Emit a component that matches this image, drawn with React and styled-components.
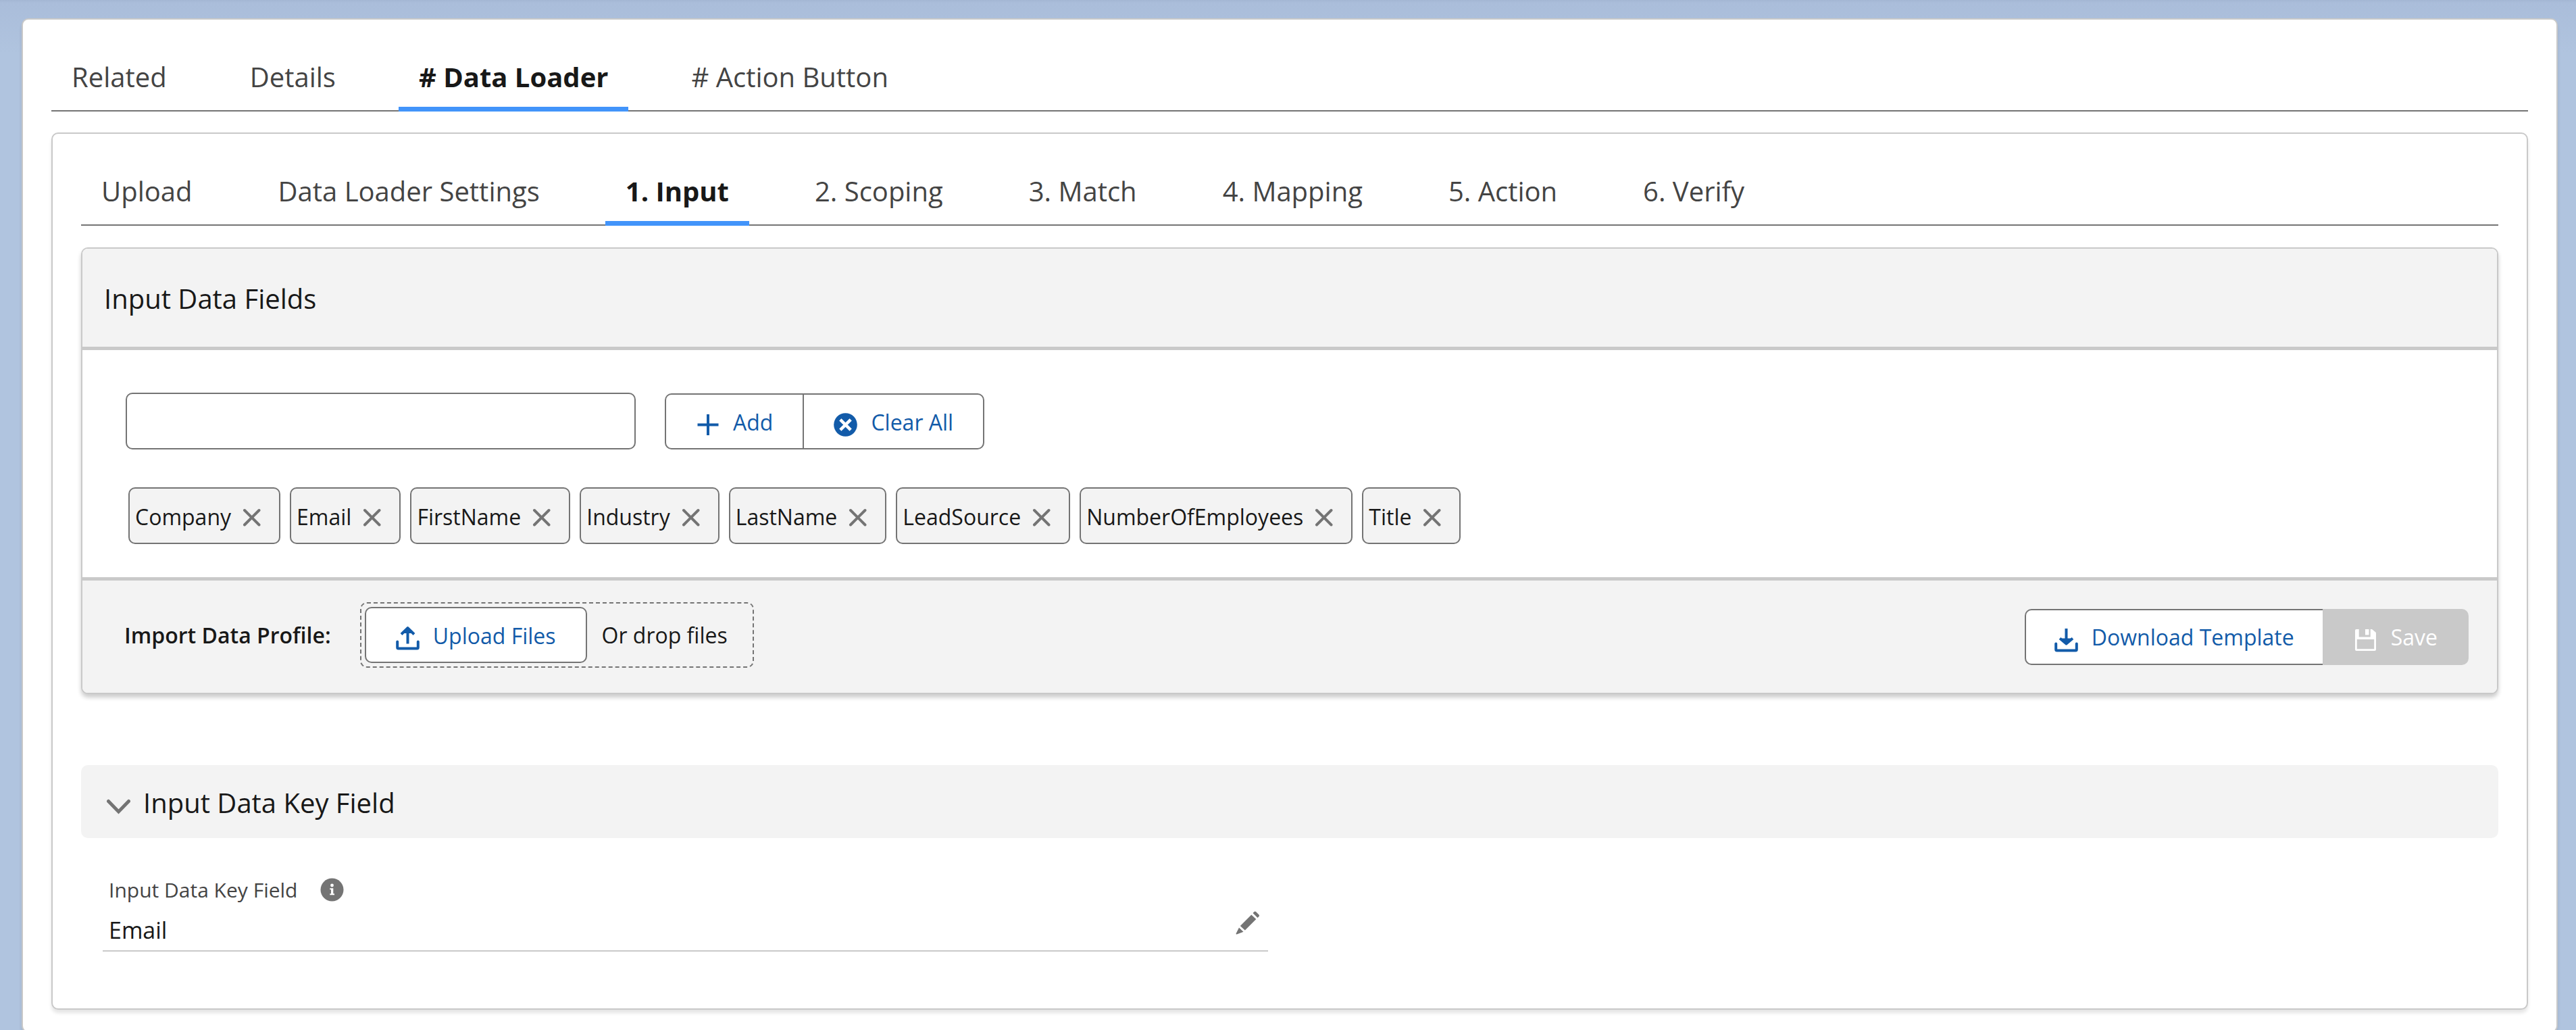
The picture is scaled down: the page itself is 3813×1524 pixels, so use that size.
import React, { useState } from 'react';
import styled, { createGlobalStyle, css } from 'styled-components';

const color = {
  text: '#181818',
  muted: '#444444',
  line: '#747474',
  border: '#c9c9c9',
  surface: '#f3f3f3',
  link: '#125ba9',
  active: '#4294fa',
};

const GlobalStyle = createGlobalStyle`
  *, *::before, *::after { box-sizing: border-box; }
  body {
    margin: 0;
    color: ${color.text};
    font-family: 'Open Sans', 'Noto Sans', sans-serif;
    font-size: 32px;
  }
  button, input { font: inherit; color: inherit; }
  h2, h3 { margin: 0; font-size: 40px; font-weight: 400; }
`;

const Page = styled.main`
  height: 100vh;
  overflow: hidden;
  padding: 27px 27px 0 32px;
  background: linear-gradient(#a3b6d3 0, #aabdda 4px, #b0c4df 80px);
`;

const Card = styled.section`
  display: flex;
  flex-direction: column;
  border: 2px solid ${color.border};
  border-radius: 10px;
  background: #fff;
  box-shadow: 0 5px 5px rgba(0, 0, 0, 0.1);
`;

const RecordCard = styled(Card)`
  gap: 31px;
  padding: 41px 42px 32px;
`;

const LoaderCard = styled(Card)`
  padding: 41px 42px 84px;
`;

const TabList = styled.div`
  display: flex;
  gap: ${(p) => p.$gap}px;
  box-shadow: inset 0 -2px ${color.line};
`;

const Tab = styled.button`
  padding: 0 30px;
  border: 0;
  border-bottom: 7px solid ${(p) => (p.$active ? color.active : 'transparent')};
  background: none;
  color: ${(p) => (p.$active ? color.text : color.muted)};
  font-size: 40px;
  font-weight: ${(p) => (p.$active ? 700 : 400)};
  line-height: 88px;
  white-space: nowrap;
`;

const Panel = styled(Card)`
  margin-top: 32px;
  overflow: hidden;
  box-shadow: 0 5px 6px rgba(0, 0, 0, 0.2);
`;

const PanelHeader = styled.header`
  display: flex;
  align-items: center;
  height: 150px;
  padding: 2px 32px 0;
  border-bottom: 5px solid ${color.border};
  background: ${color.surface};
`;

const PanelBody = styled.div`
  display: flex;
  flex-direction: column;
  gap: 56px;
  padding: 63px 64px 49px;
`;

const PanelFooter = styled.footer`
  display: flex;
  align-items: center;
  justify-content: space-between;
  min-height: 171px;
  padding: 0 42px 0 62px;
  border-top: 5px solid ${color.border};
  background: ${color.surface};
`;

const FieldForm = styled.form`
  display: flex;
  align-items: flex-end;
  gap: 43px;
`;

const TextInput = styled.input`
  width: 755px;
  height: 84px;
  padding: 0 30px;
  border: 2px solid ${color.line};
  border-radius: 10px;
  background: #fff;
`;

const ButtonGroup = styled.div`
  display: flex;

  & > :first-child { border-radius: 10px 0 0 10px; border-right-width: 0; }
  & > :last-child { border-radius: 0 10px 10px 0; }
`;

const Button = styled.button`
  display: flex;
  align-items: center;
  gap: 20px;
  height: 83px;
  padding: 2px ${(p) => p.$pad || 44}px 0;
  border: 2px solid ${color.line};
  border-radius: 10px;
  background: #fff;
  color: ${color.link};
  line-height: 44px;
  white-space: nowrap;

  & > svg { margin-top: 8px; }

  ${(p) =>
    p.disabled &&
    css`
      border-color: ${color.border};
      background: ${color.border};
      color: #fff;
    `}
`;

const ChipList = styled.ul`
  display: flex;
  flex-wrap: wrap;
  gap: 14px;
  margin: 0;
  padding: 0 0 0 4px;
  list-style: none;
`;

const Chip = styled.li`
  display: flex;
  align-items: center;
  gap: 13px;
  height: 84px;
  padding: 2px 23px 0 8px;
  border: 2px solid ${color.line};
  border-radius: 10px;
  background: ${color.surface};
`;

const IconButton = styled.button`
  display: flex;
  align-items: center;
  justify-content: center;
  width: 35px;
  height: 40px;
  padding: 0;
  border: 0;
  background: none;
  color: ${color.line};
`;

const ImportRow = styled.div`
  display: flex;
  align-items: center;
  gap: 43px;
  padding-bottom: 5px;
`;

const ImportLabel = styled.span`
  font-weight: 600;
`;

const DropZone = styled.div`
  display: flex;
  align-items: center;
  padding: 5px;
  border: 2px dashed ${color.line};
  border-radius: 10px;
`;

const DropHint = styled.span`
  padding: 0 32px 0 22px;
`;

const SectionToggle = styled.button`
  display: flex;
  align-items: center;
  gap: 19px;
  width: 100%;
  height: 108px;
  margin-top: 105px;
  padding: 2px 38px 0;
  border: 0;
  border-radius: 10px;
  background: ${color.surface};
  font-size: 40px;
  text-align: left;

  & > svg { margin-top: 12px; color: ${color.line}; }
`;

const FieldGrid = styled.div`
  display: grid;
  grid-template-columns: 1fr 1fr;
  padding-top: 51px;
`;

const Field = styled.div`
  margin: 0 32px;
  padding: 0 13px 0 9px;
  border-bottom: 2px solid ${color.border};
`;

const FieldLabel = styled.div`
  display: flex;
  align-items: center;
  gap: 34px;
  height: 50px;
  color: ${color.muted};
  font-size: 30px;
`;

const FieldValue = styled.div`
  display: flex;
  justify-content: space-between;
  margin-top: 5px;
  font-size: 34px;
  line-height: 60px;
`;

const Svg = ({ children, ...rest }) => (
  <svg width="35" height="35" viewBox="0 0 35 35" fill="none" stroke="currentColor" aria-hidden="true" {...rest}>
    {children}
  </svg>
);

const PlusIcon = () => (
  <Svg strokeWidth="4" strokeLinecap="square">
    <path d="M18 4v27M4.500 17.500h27" />
  </Svg>
);

const ClearIcon = () => (
  <Svg strokeWidth="4.500">
    <circle cx="17.500" cy="17.500" r="17.300" fill="currentColor" stroke="none" />
    <path d="M9.800 9.800l15.400 15.400M25.200 9.800L9.800 25.200" stroke="#fff" />
  </Svg>
);

const CloseIcon = () => (
  <Svg strokeWidth="4" strokeLinecap="round">
    <path d="M7 8l21.500 21.500M28.500 8L7 29.500" />
  </Svg>
);

const Tray = () => (
  <path
    d="M2.200 22.500v8.500a1.500 1.500 0 0 0 1.500 1.500h27.600a1.500 1.500 0 0 0 1.500-1.500v-8.500"
    strokeLinecap="round"
  />
);

const UploadIcon = () => (
  <Svg strokeWidth="4" strokeLinejoin="round">
    <Tray />
    <path d="M17.500 4v21.500" />
    <path d="M8 11.500L17.500 2.200l9.500 9.300" />
    <path d="M11 10l6.500-7 6.500 7z" fill="currentColor" stroke="none" />
  </Svg>
);

const DownloadIcon = () => (
  <Svg strokeWidth="4" strokeLinejoin="round">
    <Tray />
    <path d="M17.500 0v20" />
    <path d="M8 14.500l9.500 8 9.500-8" />
    <path d="M10 14.500h15l-7.500 9.500z" fill="currentColor" stroke="none" />
  </Svg>
);

const SaveIcon = () => (
  <Svg fill="currentColor" stroke="none">
    <path
      fillRule="evenodd"
      d="M4 1h3.700v11.500h17V1h2.300l6 5v25a2 2 0 0 1-2 2H4a2 2 0 0 1-2-2V3a2 2 0 0 1 2-2zM4.800 16v14.200h25.400V16z"
    />
    <path d="M17 1h5.500v8.500H17z" />
  </Svg>
);

const ChevronIcon = () => (
  <Svg strokeWidth="5" strokeLinecap="round">
    <path d="M2.500 9.500l15 15.500 15-15.500" />
  </Svg>
);

const InfoIcon = () => (
  <Svg fill={color.line} stroke="none">
    <circle cx="17.500" cy="17.500" r="17" />
    <circle cx="17.500" cy="11" r="2.400" fill="#fff" />
    <path d="M14.300 15.200h5v8h1.700v2h-6.700v-2h1.700v-6h-1.700z" fill="#fff" />
  </Svg>
);

const PencilIcon = () => (
  <Svg width="36" height="36" fill="currentColor" stroke="none">
    <path d="M25.500 2.500l2-2a2 2 0 0 1 2.500 0l4.500 4.500a2 2 0 0 1 0 2.500l-2 2z" />
    <path d="M23.300 5l7 6.500L13.800 28l-7-6.500z" />
    <path d="M5 24l6.500 6.200L1.500 34a1 1 0 0 1-1-1z" />
  </Svg>
);

const recordTabs = ['Related', 'Details', '# Data Loader', '# Action Button'];
const loaderTabs = [
  'Upload',
  'Data Loader Settings',
  '1. Input',
  '2. Scoping',
  '3. Match',
  '4. Mapping',
  '5. Action',
  '6. Verify',
];
const initialFields = [
  'Company',
  'Email',
  'FirstName',
  'Industry',
  'LastName',
  'LeadSource',
  'NumberOfEmployees',
  'Title',
];

function Tabs({ items, initial, gap }) {
  const [current, setCurrent] = useState(initial);
  return (
    <TabList role="tablist" $gap={gap}>
      {items.map((item) => (
        <Tab
          key={item}
          type="button"
          role="tab"
          aria-selected={item === current}
          $active={item === current}
          onClick={() => setCurrent(item)}
        >
          {item}
        </Tab>
      ))}
    </TabList>
  );
}

export default function App() {
  const [fields, setFields] = useState(initialFields);
  const [draft, setDraft] = useState('');
  const [open, setOpen] = useState(true);

  const addField = (event) => {
    event.preventDefault();
    const name = draft.trim();
    if (name && !fields.includes(name)) setFields([...fields, name]);
    setDraft('');
  };

  return (
    <>
      <GlobalStyle />
      <Page>
        <RecordCard>
          <Tabs items={recordTabs} initial="# Data Loader" gap={63} />
          <LoaderCard>
            <Tabs items={loaderTabs} initial="1. Input" gap={67} />

            <Panel>
              <PanelHeader>
                <h2 id="fields-title">Input Data Fields</h2>
              </PanelHeader>
              <PanelBody>
                <FieldForm onSubmit={addField}>
                  <TextInput
                    type="text"
                    aria-labelledby="fields-title"
                    value={draft}
                    onChange={(event) => setDraft(event.target.value)}
                  />
                  <ButtonGroup>
                    <Button type="submit">
                      <PlusIcon />
                      Add
                    </Button>
                    <Button type="button" onClick={() => setFields([])}>
                      <ClearIcon />
                      Clear All
                    </Button>
                  </ButtonGroup>
                </FieldForm>
                <ChipList>
                  {fields.map((name) => (
                    <Chip key={name}>
                      {name}
                      <IconButton
                        type="button"
                        aria-label={`Remove ${name}`}
                        onClick={() => setFields(fields.filter((f) => f !== name))}
                      >
                        <CloseIcon />
                      </IconButton>
                    </Chip>
                  ))}
                </ChipList>
              </PanelBody>
              <PanelFooter>
                <ImportRow>
                  <ImportLabel id="import-label">Import Data Profile:</ImportLabel>
                  <DropZone role="group" aria-labelledby="import-label">
                    <Button type="button">
                      <UploadIcon />
                      Upload Files
                    </Button>
                    <DropHint>Or drop files</DropHint>
                  </DropZone>
                </ImportRow>
                <ButtonGroup>
                  <Button type="button" $pad={42}>
                    <DownloadIcon />
                    Download Template
                  </Button>
                  <Button type="button" disabled>
                    <SaveIcon />
                    Save
                  </Button>
                </ButtonGroup>
              </PanelFooter>
            </Panel>

            <h3>
              <SectionToggle type="button" aria-expanded={open} onClick={() => setOpen(!open)}>
                <ChevronIcon />
                Input Data Key Field
              </SectionToggle>
            </h3>
            {open && (
              <FieldGrid>
                <Field>
                  <FieldLabel>
                    Input Data Key Field
                    <InfoIcon />
                  </FieldLabel>
                  <FieldValue>
                    Email
                    <IconButton type="button" aria-label="Edit Input Data Key Field">
                      <PencilIcon />
                    </IconButton>
                  </FieldValue>
                </Field>
              </FieldGrid>
            )}
          </LoaderCard>
        </RecordCard>
      </Page>
    </>
  );
}
